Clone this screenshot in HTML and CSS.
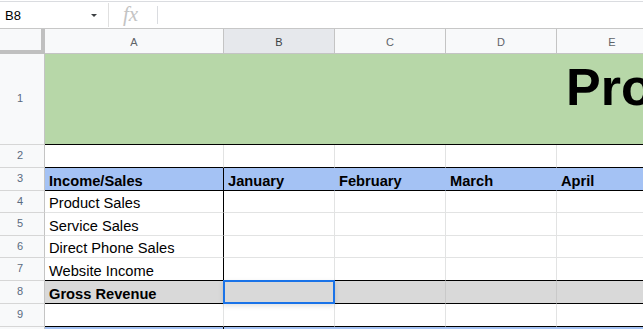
FILE: index.html
```html
<!DOCTYPE html>
<html>
<head>
<meta charset="utf-8">
<link rel="stylesheet" href="styles.css">
</head>
<body>
<div class="app">
  <div class="formula-bar">
    <div class="name-box">
      <span class="name-text">B8</span>
      <span class="caret"></span>
    </div>
    <div class="sep"></div>
    <div class="fx">fx</div>
    <div class="sep short"></div>
    <div class="formula-input"></div>
  </div>
  <div class="sheet">
    <div class="corner"></div>
    <div class="colhead">A</div>
    <div class="colhead sel">B</div>
    <div class="colhead">C</div>
    <div class="colhead">D</div>
    <div class="colhead">E</div>

    <div class="rowhead">1</div>
    <div class="cell title"><span class="title-text">Profit and Loss Statement</span></div>

    <div class="rowhead">2</div>
    <div class="cell r2"></div><div class="cell r2"></div><div class="cell r2"></div><div class="cell r2"></div><div class="cell r2"></div>

    <div class="rowhead">3</div>
    <div class="cell r3 colA">Income/Sales</div><div class="cell r3">January</div><div class="cell r3">February</div><div class="cell r3">March</div><div class="cell r3">April</div>

    <div class="rowhead">4</div>
    <div class="cell body colA">Product Sales</div><div class="cell body"></div><div class="cell body"></div><div class="cell body"></div><div class="cell body"></div>

    <div class="rowhead">5</div>
    <div class="cell body colA">Service Sales</div><div class="cell body"></div><div class="cell body"></div><div class="cell body"></div><div class="cell body"></div>

    <div class="rowhead">6</div>
    <div class="cell body colA">Direct Phone Sales</div><div class="cell body"></div><div class="cell body"></div><div class="cell body"></div><div class="cell body"></div>

    <div class="rowhead">7</div>
    <div class="cell body last colA">Website Income</div><div class="cell body last"></div><div class="cell body last"></div><div class="cell body last"></div><div class="cell body last"></div>

    <div class="rowhead">8</div>
    <div class="cell r8 colA">Gross Revenue</div><div class="cell r8"></div><div class="cell r8"></div><div class="cell r8"></div><div class="cell r8"></div>

    <div class="rowhead">9</div>
    <div class="cell r9"></div><div class="cell r9"></div><div class="cell r9"></div><div class="cell r9"></div><div class="cell r9"></div>

    <div class="rowhead"></div>
    <div class="cell r3 colA"></div><div class="cell r3"></div><div class="cell r3"></div><div class="cell r3"></div><div class="cell r3"></div>

    <div class="selection"></div>
  </div>
</div>
</body>
</html>
```

FILE: styles.css
```css
html, body {
  margin: 0;
  padding: 0;
  background: #ffffff;
}
body {
  width: 643px;
  height: 329px;
  overflow: hidden;
  font-family: "Liberation Sans", Arial, sans-serif;
}
.app {
  width: 643px;
  height: 329px;
  overflow: hidden;
}
.formula-bar {
  box-sizing: border-box;
  margin-top: 1px;
  height: 28px;
  border-top: 1px solid #dadce0;
  border-bottom: 1px solid #c7c7c7;
  display: flex;
  align-items: stretch;
  background: #ffffff;
}
.name-box {
  width: 108px;
  display: flex;
  align-items: center;
  box-sizing: border-box;
  padding-left: 5px;
}
.name-text {
  font-size: 13px;
  color: #000000;
  line-height: 16px;
  padding-top: 1px;
}
.caret {
  margin-left: auto;
  margin-right: 11px;
  width: 0;
  height: 0;
  border-left: 3px solid transparent;
  border-right: 3px solid transparent;
  border-top: 3px solid #3c4043;
}
.sep {
  width: 1px;
  background: #e0e0e0;
  margin: 1px 0 1px 0;
}
.sep.short {
  margin: 4px 0 4px 0;
  background: #dadce0;
}
.fx {
  width: 48px;
  box-sizing: border-box;
  padding-left: 14px;
  font-family: "Liberation Serif", "Times New Roman", serif;
  font-style: italic;
  font-size: 21px;
  color: #c4c4c4;
  display: flex;
  align-items: center;
  padding-bottom: 2px;
}
.formula-input {
  flex: 1;
}

.sheet {
  position: relative;
  display: grid;
  grid-template-columns: 45px 179px 111px 111px 111px 111px;
  grid-template-rows: 25px 91px 23px 23px 22px 23px 22px 23px 23px 23px 23px;
  width: 668px;
}
.sheet > div {
  box-sizing: border-box;
}
.corner {
  background: #f8f9fa;
  border-right: 4px solid #c0c0c0;
  border-bottom: 4px solid #c0c0c0;
}
.colhead {
  background: #f8f9fa;
  border-right: 1px solid #c4c4c4;
  border-bottom: 1px solid #c4c4c4;
  font-size: 11px;
  color: #5f6368;
  display: flex;
  align-items: center;
  justify-content: center;
  padding-top: 1px;
}
.colhead.sel {
  background: #e6e8ec;
  color: #3c4043;
}
.rowhead {
  background: #f8f9fa;
  border-right: 1px solid #c4c4c4;
  border-bottom: 1px solid #d6d6d6;
  font-size: 11px;
  color: #5a6a80;
  display: flex;
  align-items: center;
  justify-content: center;
  padding-right: 4px;
  padding-bottom: 2px;
}
.cell {
  border-right: 1px solid #e2e3e3;
  border-bottom: 1px solid #e2e3e3;
  font-size: 14.667px;
  line-height: 17px;
  color: #000000;
  display: flex;
  align-items: flex-end;
  padding: 0 4px;
  white-space: nowrap;
  overflow: hidden;
}
.title {
  grid-column: 2 / span 5;
  background: #b7d7a8;
  border-right: none;
  border-bottom: 1px solid #000000;
  align-items: flex-start;
  padding: 7px 0 0 521px;
}
.title-text {
  font-weight: bold;
  font-size: 52px;
  line-height: 52px;
  white-space: nowrap;
}
.r2 {
  border-bottom-color: #000000;
}
.r3 {
  background: #a4c2f4;
  border-right-color: transparent;
  border-bottom-color: #000000;
  font-weight: bold;
}
.colA {
  border-right-color: #000000;
}
.body.last {
  border-bottom-color: #000000;
}
.r8 {
  background: #d9d9d9;
  border-right-color: #c9c9c9;
  border-bottom-color: #000000;
  font-weight: bold;
}
.r8.colA {
  border-right-color: #000000;
}
.r9 {
  border-bottom-color: #000000;
}
.selection {
  position: absolute;
  left: 223px;
  top: 251px;
  width: 112px;
  height: 24px;
  box-sizing: border-box;
  border: 2px solid #1a73e8;
  box-shadow: 0 2px 5px rgba(0, 0, 0, 0.12);
}
```
